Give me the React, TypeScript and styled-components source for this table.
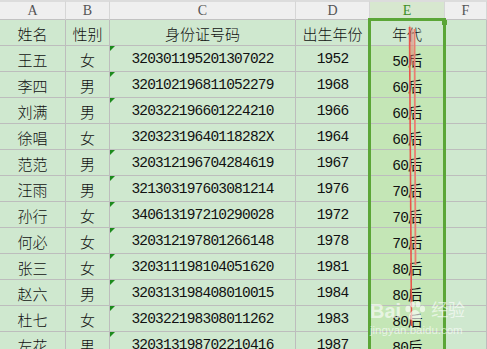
import React from "react";
import styled, { createGlobalStyle } from "styled-components";

const GlobalStyle = createGlobalStyle`
  html, body {
    margin: 0;
    padding: 0;
    background: #cfe8cf;
  }
  #root {
    width: 487px;
    height: 349px;
    overflow: hidden;
  }
`;

const rows = [
  ["王五", "女", "320301195201307022", "1952", "50后", true],
  ["李四", "男", "320102196811052279", "1968", "60后", true],
  ["刘满", "男", "320322196601224210", "1966", "60后", true],
  ["徐唱", "女", "32032319640118282X", "1964", "60后", false],
  ["范范", "男", "320312196704284619", "1967", "60后", true],
  ["汪雨", "男", "321303197603081214", "1976", "70后", true],
  ["孙行", "女", "340613197210290028", "1972", "70后", true],
  ["何必", "女", "320312197801266148", "1978", "70后", true],
  ["张三", "女", "320311198104051620", "1981", "80后", true],
  ["赵六", "男", "320313198408010015", "1984", "80后", true],
  ["杜七", "女", "320322198308011262", "1983", "80后", true],
  ["左花", "男", "320313198702210416", "1987", "80后", true],
] as const;

const letters = ["A", "B", "C", "D", "E", "F"];

const App = () => {
  return (
    <>
      <GlobalStyle />
      <Wrapper>
        <Sheet>
          {letters.map((l) => (
            <ColHead key={l} $active={l === "E"}>
              {l}
            </ColHead>
          ))}

          <Cell>姓名</Cell>
          <Cell>性别</Cell>
          <Cell>身份证号码</Cell>
          <Cell>出生年份</Cell>
          <Cell>年代</Cell>
          <Cell />

          {rows.map((r) => (
            <React.Fragment key={r[0]}>
              <Cell>{r[0]}</Cell>
              <Cell>{r[1]}</Cell>
              <Cell $mono $mark={r[5]}>
                {r[2]}
              </Cell>
              <Cell $mono>{r[3]}</Cell>
              <Cell $mono $sel>
                {r[4]}
              </Cell>
              <Cell />
            </React.Fragment>
          ))}
        </Sheet>

        <Selection />
        <FillHandle />

        <Strokes width="16" height="305" viewBox="0 0 16 305">
          <path d="M4 0 L8 4 L9 40 L4 40 Z" fill="rgba(232,110,100,0.45)" />
          <line x1="4.5" y1="2" x2="6.5" y2="301" stroke="#e8564a" strokeWidth="1.6" />
          <line x1="9.5" y1="4" x2="10.5" y2="240" stroke="#ea7f70" strokeWidth="1.8" />
        </Strokes>

        <Watermark>
          <MarkTop>
            <span>Bai</span>
            <svg width="24" height="20" viewBox="0 0 24 20">
              <ellipse cx="5" cy="8" rx="2.6" ry="3.2" fill="currentColor" />
              <ellipse cx="9.5" cy="3.5" rx="2.4" ry="3" fill="currentColor" />
              <ellipse cx="15" cy="3.5" rx="2.4" ry="3" fill="currentColor" />
              <ellipse cx="19.5" cy="8" rx="2.6" ry="3.2" fill="currentColor" />
              <path
                d="M12 9 C8 9 5 15 6 17.5 C7 19.5 10 18.5 12 18.5 C14 18.5 17 19.5 18 17.5 C19 15 16 9 12 9 Z"
                fill="currentColor"
              />
            </svg>
            <span>经验</span>
          </MarkTop>
          <MarkUrl>jingyan.baidu.com</MarkUrl>
        </Watermark>
      </Wrapper>
    </>
  );
};
export default App;

const Wrapper = styled.div`
  position: relative;
  width: 487px;
  height: 349px;
  overflow: hidden;
  background: #cfe8cf;
`;

const Sheet = styled.div`
  display: grid;
  grid-template-columns: 66px 44px 186px 74px 75px 1fr;
  grid-auto-rows: 26px;
  grid-template-rows: 20px;
`;

const ColHead = styled.div<{ $active?: boolean }>`
  box-sizing: border-box;
  height: 20px;
  display: flex;
  align-items: center;
  justify-content: center;
  border-top: 2px solid #dcdcdc;
  border-right: 1px solid #d6d6d6;
  border-bottom: 1px solid #c2c2c2;
  background: ${(p) => (p.$active ? "#d7e7cf" : "#efefef")};
  color: ${(p) => (p.$active ? "#3c8e25" : "#555")};
  font-family: "Liberation Serif", "DejaVu Serif", serif;
  font-size: 14px;
  padding-top: 1px;
`;

const Cell = styled.div<{ $mono?: boolean; $sel?: boolean; $mark?: boolean }>`
  position: relative;
  box-sizing: border-box;
  display: flex;
  align-items: center;
  justify-content: center;
  border-right: 1px solid #bdbdbd;
  border-bottom: 1px solid #bdbdbd;
  background: ${(p) => (p.$sel ? "#c4e6b6" : "#cfe8cf")};
  color: #111;
  white-space: nowrap;
  font-family: ${(p) =>
    p.$mono
      ? `"Liberation Mono", "Noto Sans CJK SC", monospace`
      : `"Noto Sans CJK SC", sans-serif`};
  font-weight: ${(p) => (p.$mono ? 400 : 300)};
  font-size: ${(p) => (p.$mono ? "14.5px" : "15px")};
  letter-spacing: ${(p) => (p.$mono ? "-0.8px" : "0")};
  padding-top: 1px;

  &::before {
    content: "";
    display: ${(p) => (p.$mark ? "block" : "none")};
    position: absolute;
    top: 0;
    left: 0;
    border-top: 5px solid #1c8a1c;
    border-right: 5px solid transparent;
  }
`;

const Selection = styled.div`
  position: absolute;
  left: 368px;
  top: 18px;
  width: 78px;
  bottom: -4px;
  box-sizing: border-box;
  border: 3px solid #5ba637;
  pointer-events: none;
`;

const FillHandle = styled.div`
  position: absolute;
  left: 442px;
  top: 20px;
  width: 5px;
  height: 5px;
  background: #5ba637;
`;

const Strokes = styled.svg`
  position: absolute;
  left: 405px;
  top: 25px;
`;

const Watermark = styled.div`
  position: absolute;
  left: 370px;
  top: 300px;
  display: flex;
  flex-direction: column;
  align-items: flex-start;
  color: rgba(255, 255, 255, 0.62);
  pointer-events: none;
`;

const MarkTop = styled.div`
  display: flex;
  align-items: center;
  gap: 2px;
  font-family: "Liberation Sans", "Noto Sans CJK SC", sans-serif;
  font-weight: 700;
  font-size: 20px;
  line-height: 22px;

  span:last-child {
    font-size: 17px;
    font-weight: 400;
    margin-left: 2px;
  }
`;

const MarkUrl = styled.div`
  font-family: "Liberation Sans", sans-serif;
  font-size: 11.5px;
  line-height: 13px;
  margin-top: 2px;
`;
